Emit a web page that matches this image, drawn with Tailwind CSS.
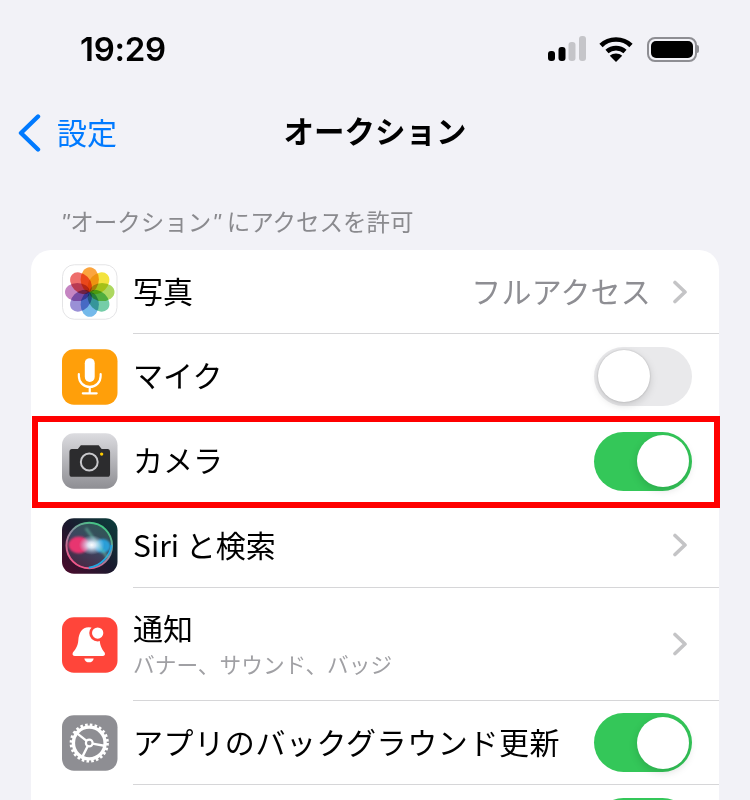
<!DOCTYPE html>
<html lang="ja">
<head>
    <meta charset="UTF-8">
    <title>オークション</title>
    <script src="https://cdn.jsdelivr.net/npm/@tailwindcss/browser@4"></script>
</head>
<body class="bg-[#f2f2f7]">
<div class="relative w-[750px] h-[800px] overflow-hidden bg-[#f2f2f7] text-black font-['Noto_Sans_CJK_JP','Noto_Sans',sans-serif]">

    <!-- Status bar -->
    <div class="h-[98px] flex items-center justify-between pl-[80px] pr-[51px]">
        <span class="mt-[1px] text-[33px] font-semibold font-['Inter',sans-serif] tracking-[-0.3px]">19:29</span>
        <div class="flex items-center">
            <svg class="mr-[13px]" width="38" height="26" viewBox="0 0 38 26">
                <rect x="0" y="15" width="7" height="10" rx="3"/>
                <rect x="10.500" y="11" width="7" height="14" rx="3"/>
                <rect x="20.500" y="6" width="7" height="19" rx="3" fill="#c5c5c9"/>
                <rect x="31" y="0" width="7" height="25" rx="3" fill="#c5c5c9"/>
            </svg>
            <svg class="mr-[14px]" width="34" height="26" viewBox="0 0 34 26">
                <path d="M2 9.500C10 1.500 24 1.500 32 9.500" fill="none" stroke="#000" stroke-width="4.600"/>
                <path d="M8 15.500C13 11 21 11 26 15.500" fill="none" stroke="#000" stroke-width="4.600"/>
                <path d="M17 26L10.800 19.800C14.500 16.800 19.500 16.800 23.200 19.800Z"/>
            </svg>
            <div class="flex items-center">
                <div class="w-[50px] h-[25px] rounded-[8px] border-2 border-[#8e8e93] p-[2px]">
                    <div class="w-full h-full rounded-[5px] bg-black"></div>
                </div>
                <div class="w-[2px] h-[8px] rounded-r bg-[#8e8e93]"></div>
            </div>
        </div>
    </div>

    <!-- Nav -->
    <div class="h-[70px] pb-[4px] grid grid-cols-3 items-center">
        <div class="flex items-center pl-[18px] gap-[16px] text-[#007aff] text-[30px]">
            <svg class="mt-[3px]" width="23" height="38" viewBox="0 0 23 38"><path d="M20 2.500L3 19L20 35.500" fill="none" stroke="#007aff" stroke-width="4.400" stroke-linecap="round" stroke-linejoin="round"/></svg>
            <span class="mt-[1px]">設定</span>
        </div>
        <div class="text-center text-[30.500px] font-bold whitespace-nowrap">オークション</div>
    </div>

    <!-- Section label -->
    <div class="h-[82px] flex items-end pl-[61px] pb-[10px] text-[23.500px] leading-[34px] text-[#8a8a8e]">
        <span class="whitespace-nowrap"><i class="font-['Liberation_Sans'] pr-[1px]">"</i>オークション<i class="font-['Liberation_Sans'] pl-[1px] pr-[6px]">"</i>にアクセスを許可</span>
    </div>

    <!-- Card -->
    <div class="mx-[31px] rounded-t-[20px] bg-white text-[30px]">

        <div class="h-[84px] flex items-center pl-[31px]">
            <svg class="shrink-0" width="55.500" height="56" viewBox="0 0 56 56">
                <rect x="0.500" y="0.500" width="55" height="55" rx="12" fill="#fff" stroke="#e4e4e6"/>
                <g class="mix-blend-multiply">
                    <ellipse cx="28" cy="15.500" rx="9.200" ry="12.500" fill="#fba53e" class="mix-blend-multiply"/>
                    <ellipse cx="28" cy="15.500" rx="9.200" ry="12.500" fill="#f3e33e" transform="rotate(45 28 28)" class="mix-blend-multiply"/>
                    <ellipse cx="28" cy="15.500" rx="9.200" ry="12.500" fill="#add860" transform="rotate(90 28 28)" class="mix-blend-multiply"/>
                    <ellipse cx="28" cy="15.500" rx="9.200" ry="12.500" fill="#75cda8" transform="rotate(135 28 28)" class="mix-blend-multiply"/>
                    <ellipse cx="28" cy="15.500" rx="9.200" ry="12.500" fill="#74b9ea" transform="rotate(180 28 28)" class="mix-blend-multiply"/>
                    <ellipse cx="28" cy="15.500" rx="9.200" ry="12.500" fill="#9a90d6" transform="rotate(225 28 28)" class="mix-blend-multiply"/>
                    <ellipse cx="28" cy="15.500" rx="9.200" ry="12.500" fill="#c585c2" transform="rotate(270 28 28)" class="mix-blend-multiply"/>
                    <ellipse cx="28" cy="15.500" rx="9.200" ry="12.500" fill="#ee6e6c" transform="rotate(315 28 28)" class="mix-blend-multiply"/>
                </g>
            </svg>
            <div class="ml-[15.500px] flex-1 h-full flex items-center justify-between border-b border-[#d6d6d8] pr-[31px]">
                <span class="mb-[3px]">写真</span>
                <div class="flex items-center gap-[21px] text-[#8e8e93]">
                    <span class="mb-[3px] whitespace-nowrap tracking-[0.2px]">フルアクセス</span>
                    <svg width="16" height="24" viewBox="0 0 16 24"><path d="M3 2.500L13 12L3 21.500" fill="none" stroke="#c4c4c6" stroke-width="3.600" stroke-linecap="round" stroke-linejoin="round"/></svg>
                </div>
            </div>
        </div>

        <div class="h-[85px] flex items-center pl-[31px]">
            <svg class="shrink-0" width="55.500" height="56" viewBox="0 0 56 56">
                <rect width="56" height="56" rx="12" fill="#ff9f0a"/>
                <rect x="23" y="9" width="10" height="24" rx="5" fill="#fff"/>
                <path d="M17 25V27C17 33.500 22 38 28 38C34 38 39 33.500 39 27V25M28 38V44M21 44.500H35" fill="none" stroke="#fff" stroke-width="2.200" stroke-linecap="round"/>
            </svg>
            <div class="ml-[15.500px] flex-1 h-full flex items-center justify-between border-b border-[#d6d6d8] pr-[27px]">
                <span class="mb-[4px]">マイク</span>
                <div class="w-[98px] h-[59px] rounded-full bg-[#e9e9eb] p-[3.500px] flex justify-start">
                    <div class="w-[52px] h-[52px] rounded-full bg-white shadow-[0_3px_8px_rgba(0,0,0,0.15),0_0_2px_rgba(0,0,0,0.2)]"></div>
                </div>
            </div>
        </div>

        <div class="h-[84px] flex items-center pl-[31px]">
            <svg class="shrink-0" width="55.500" height="56" viewBox="0 0 56 56">
                <defs><linearGradient id="cam" x1="0" y1="0" x2="0" y2="1"><stop offset="0" stop-color="#dcdce0"/><stop offset="1" stop-color="#8e8e93"/></linearGradient></defs>
                <rect width="56" height="56" rx="12" fill="url(#cam)"/>
                <path d="M10 16H16L19 12H37L40 16H46C47.500 16 48.500 17 48.500 19V41C48.500 43 47.500 44 46 44H10C8.500 44 7.500 43 7.500 41V19C7.500 17 8.500 16 10 16Z" fill="#2c2c2e"/>
                <circle cx="27.500" cy="29" r="8.500" fill="none" stroke="#c8c8cc" stroke-width="2"/>
                <circle cx="40" cy="21" r="1.700" fill="#ffcc00"/>
            </svg>
            <div class="ml-[15.500px] flex-1 h-full flex items-center justify-between pr-[27px]">
                <span class="mb-[4px]">カメラ</span>
                <div class="w-[98px] h-[59px] rounded-full bg-[#34c759] p-[3.500px] flex justify-end">
                    <div class="w-[52px] h-[52px] rounded-full bg-white shadow-[0_3px_8px_rgba(0,0,0,0.15)]"></div>
                </div>
            </div>
        </div>

        <div class="h-[85px] flex items-center pl-[31px]">
            <svg class="shrink-0" width="55.500" height="56" viewBox="0 0 56 56">
                <defs>
                    <linearGradient id="sirib" x1="0" y1="1" x2="1" y2="0"><stop offset="0" stop-color="#4d0a2c"/><stop offset="0.500" stop-color="#1a1a2e"/><stop offset="1" stop-color="#0b3f3c"/></linearGradient>
                    <radialGradient id="sirig"><stop offset="0" stop-color="#fff"/><stop offset="0.300" stop-color="#e4f2ff" stop-opacity="0.900"/><stop offset="1" stop-color="#bfe0ff" stop-opacity="0"/></radialGradient>
                    <linearGradient id="sirid" x1="0.800" y1="0" x2="0.200" y2="1"><stop offset="0" stop-color="#2f5a55"/><stop offset="0.500" stop-color="#3c4560"/><stop offset="1" stop-color="#4a2440"/></linearGradient>
                    <linearGradient id="sirir" x1="0.800" y1="0" x2="0.200" y2="1"><stop offset="0" stop-color="#35d07f"/><stop offset="0.450" stop-color="#8c8ca0"/><stop offset="1" stop-color="#ff4f86"/></linearGradient>
                    <filter id="blur2"><feGaussianBlur stdDeviation="1.300"/></filter>
                </defs>
                <rect width="56" height="56" rx="12" fill="url(#sirib)"/>
                <circle cx="27.500" cy="27.500" r="23" fill="url(#sirid)" stroke="url(#sirir)" stroke-width="2"/>
                <path d="M50 27C49 37 40 48 27 50" fill="none" stroke="#22a6e0" stroke-width="2"/>
                <g filter="url(#blur2)">
                    <ellipse cx="17" cy="27" rx="10.500" ry="8.500" fill="#e8346f"/>
                    <ellipse cx="41" cy="28" rx="8" ry="7" fill="#2a9fd8"/>
                    <path d="M24 10L46 40" stroke="#66c7a8" stroke-width="3" opacity="0.500"/>
                </g>
                <ellipse cx="30" cy="27" rx="13" ry="10" fill="url(#sirig)"/>
            </svg>
            <div class="ml-[15.500px] flex-1 h-full flex items-center justify-between border-b border-[#d6d6d8] pr-[31px]">
                <span class="mb-[2px]">Siri と検索</span>
                <svg width="16" height="24" viewBox="0 0 16 24"><path d="M3 2.500L13 12L3 21.500" fill="none" stroke="#c4c4c6" stroke-width="3.600" stroke-linecap="round" stroke-linejoin="round"/></svg>
            </div>
        </div>

        <div class="h-[113px] flex items-center pl-[31px]">
            <svg class="shrink-0" width="55.500" height="56" viewBox="0 0 56 56">
                <rect width="56" height="56" rx="12" fill="#ff453a"/>
                <path d="M27 10C20 10 17 16 16.500 23C16 30 13 33 11 35.500C10 37.500 11 39 13 39H41C43 39 44 37.500 43 35.500C41 33 38.500 30 38 23C37.500 16 34 10 27 10Z" fill="#fff"/>
                <path d="M22.500 41.500H32C31.500 44 29.500 45.500 27.300 45.500C25 45.500 23 44 22.500 41.500Z" fill="#fff"/>
                <circle cx="36" cy="16" r="8.500" fill="#ff453a"/>
                <circle cx="36" cy="16" r="5.700" fill="#fff"/>
            </svg>
            <div class="ml-[15.500px] flex-1 h-full flex items-center justify-between border-b border-[#d6d6d8] pr-[31px]">
                <div class="mb-[4px] flex flex-col">
                    <span class="leading-[44px]">通知</span>
                    <span class="text-[21.700px] leading-[30px] text-[#a0a0a4] whitespace-nowrap">バナー、サウンド、バッジ</span>
                </div>
                <svg width="16" height="24" viewBox="0 0 16 24"><path d="M3 2.500L13 12L3 21.500" fill="none" stroke="#c4c4c6" stroke-width="3.600" stroke-linecap="round" stroke-linejoin="round"/></svg>
            </div>
        </div>

        <div class="h-[84px] flex items-center pl-[31px]">
            <svg class="shrink-0" width="55.500" height="56" viewBox="0 0 56 56">
                <rect width="56" height="56" rx="12" fill="#8e8e93"/>
                <circle cx="27.500" cy="28" r="16" fill="none" stroke="#fff" stroke-width="3.400"/>
                <circle cx="27.500" cy="28" r="18.200" fill="none" stroke="#fff" stroke-width="3.200" stroke-dasharray="2.600 2.165"/>
                <circle cx="27.500" cy="28" r="3.400" fill="none" stroke="#fff" stroke-width="2.200"/>
                <path d="M24.800 25.900L13 16.500M30.800 28.600L44 31M26 31.100L20 43" fill="none" stroke="#fff" stroke-width="2.400"/>
            </svg>
            <div class="ml-[15.500px] flex-1 h-full flex items-center justify-between border-b border-[#d6d6d8] pr-[27px]">
                <span class="mb-[3px] whitespace-nowrap tracking-[0.6px]">アプリのバックグラウンド更新</span>
                <div class="w-[98px] h-[59px] rounded-full bg-[#34c759] p-[3.500px] flex justify-end">
                    <div class="w-[52px] h-[52px] rounded-full bg-white shadow-[0_3px_8px_rgba(0,0,0,0.15)]"></div>
                </div>
            </div>
        </div>

        <div class="h-[84px] flex items-center justify-end pr-[27px]">
            <div class="w-[98px] h-[59px] rounded-full bg-[#34c759]"></div>
        </div>
    </div>

    <!-- Red highlight around the camera row -->
    <div class="absolute left-[32px] top-[416px] w-[688px] h-[92px] border-[6px] border-[#ff0000]"></div>
</div>
</body>
</html>
